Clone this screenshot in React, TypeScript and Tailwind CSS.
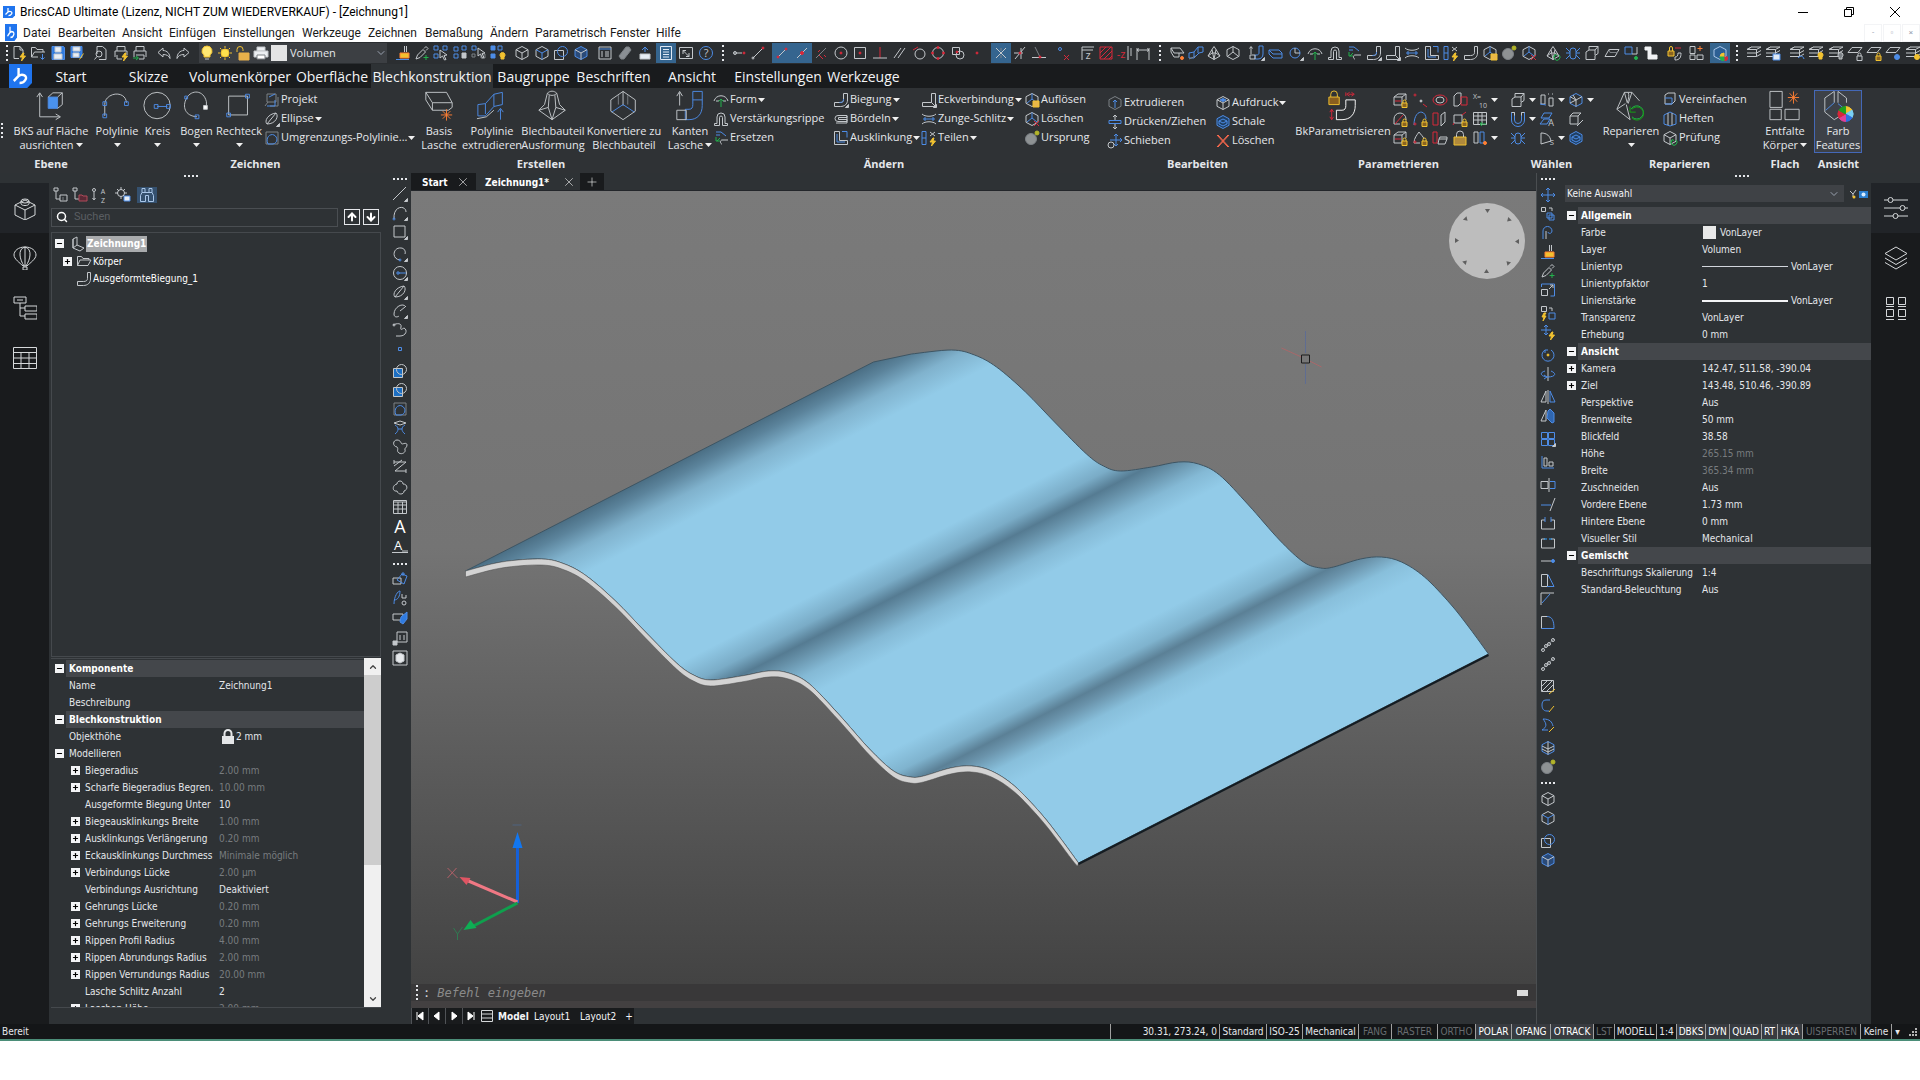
import type { ReactNode } from 'react'
import { ArrowDown, ArrowUp, ChevronDown, ChevronUp, Minus, Plus, Search, X } from 'lucide-react'

const W = '#c3c7cb'
const B = '#4d8ce6'
const R = '#d8283a'
const Y = '#f2c230'
const G = '#22b14c'
const O = '#ff7f33'
const D = '#7c8186'

type Label = { t: string; x: number; y: number; c: string; size?: number }
type Part = [string, string, string?] | Label

const circle = (x: number, y: number, r: number) =>
    `M${x - r} ${y}a${r} ${r} 0 1 0 ${2 * r} 0a${r} ${r} 0 1 0 ${-2 * r} 0z`

const box = (x: number, y: number, w: number, h = w) => `M${x} ${y}h${w}v${h}h${-w}z`

const CUBE = 'M8 1.5l6 3.2v6.6l-6 3.2-6-3.2V4.7z'
const CUBE_IN = 'M2 4.7L8 8l6-3.3M8 8v6.5'
const BOLT = 'M12 8l-3 4h2.500l-1 4 4-5h-2.500l1-3z'
const SHEET = 'M1 4.500h9.500L15 2H5.500zM1 8h9.500L15 5.500M1 11.500h9.500L15 9M5.500 2L1 4.500M10.500 4.500v7'
const BEND = 'M10.500 1.500h4V8c0 4-3 6.500-7 6.500h-6v-4h6c2 0 3-1 3-3z'
const WIRE = 'M8 1.500l2 3 4 6.500-6 3.500L2 11l4-6.500zM6 4.500L8 14.500l2-10M2 11l4-3h4l4 3'
const LOCK = 'M10 11h5v4.500h-5z'
const SHACKLE = 'M11 11V9.500a1.500 1.500 0 0 1 3 0V11'
const TAIL = 'M15.500 12.500v3h-3z'
const BULB = 'M12.500 7.500a2.500 2.500 0 0 1 1.500 4.500v2h-3v-2a2.500 2.500 0 0 1 1.500-4.500z'

const glyphs: Record<string, Part[]> = {
    newDoc: [['M3 1.500h6l3 3.500v5M9 1.500V5h3M3 1.500v12h5', W], [BOLT, Y, Y]],
    open: [['M1.500 12V2.500h4l1.500 2h6V7M1.500 12l3-5H15M1.500 12H8', W], ['M12.500 9v5M10.500 12.500l2 2 2-2', B]],
    save: [['M2 1.500h11.500l1 1v12H2z', B, '#2f7be0'], [box(5, 2, 6, 5), W, '#e8eef5'], [box(4, 9, 8, 5), W, '#e8eef5']],
    saveAs: [['M2 1.500h11v11H2z', B, '#2f7be0'], [box(4, 2, 7, 4), W, '#e8eef5'], [box(4, 8, 6, 4), W, '#e8eef5'], ['M14.500 8.500l-4 6', Y]],
    preview: [['M4 9V1.500h5.500l3.500 3v10H6', W], [circle(6, 9, 3), W], ['M4 11.500L1.500 14.500', W]],
    print: [['M4 6V1.500h8V6M2 12V6h12v4M4 10v4h5', W], [BOLT, Y, Y]],
    printOut: [['M4 6V1.500h8V6M2 12V6h12v6M4 10h8v4H7', W], ['M1 13h5M4 11l2.500 2L4 15', G]],
    undo: [['M7 3L2 7.500 7 12V9.500c4 0 6 1.500 7 4 0-5-3-8-7-8z', W]],
    redo: [['M9 3l5 4.500L9 12V9.500c-4 0-6 1.500-7 4 0-5 3-8 7-8z', W]],
    bulb: [['M8 1a5 5 0 0 1 3 9v2H5v-2a5 5 0 0 1 3-9z', Y, '#ffe873'], ['M6 14h4', W]],
    sun: [[circle(8, 8, 4), Y, '#ffe14d'], ['M8 1v2M8 13v2M1 8h2M13 8h2M3 3l1.500 1.500M11.500 11.500L13 13M13 3l-1.500 1.500M4.500 11.500L3 13', Y]],
    unlock: [['M2 7V4.500a3 3 0 0 1 6 0V6', Y], [box(4, 8, 10, 7), '#e8b04a', '#e8b04a']],
    printer: [[box(4, 2, 8, 4), W, '#eceff2'], [box(1, 6, 14, 6), W, '#eceff2'], [box(4, 10, 8, 4), D, '#fff']],
    brush: [['M9.500 1v6M11.500 1v6', W], ['M5 8h9v5H5z', O, Y], ['M1 14.500h13', B]],
    dropper: [['M2 14l1.500-4L9 4.500l2.500 2.500L6 12.500zM10 3.500l2-2 2 2-2 2', W], ['M12 10v5M9.500 12.500h5', G]],
    pick: [[box(1, 1, 4), B], [box(10, 1, 4), B], [box(1, 9, 4), B], ['M7 5l7 5-3 .5 2 4-1.500.5-2-4L7 13z', W, '#2f3234']],
    filterA: [[box(2, 2, 4), B], [box(2, 9, 4), B], [box(10, 1, 4), B], ['M10 8h4v5h-4z', W, W]],
    filterB: [[box(1, 1, 4), B], [box(10, 9, 4), D], ['M7 3l7 5-3 .5 2 4-1.500.5-2-4L7 11z', W, '#2f3234'], [box(1, 9, 3), D]],
    filterC: [[box(1, 1, 4), B, B], [box(1, 9, 4), B, B], [box(8, 1, 4), B], [BULB, Y, Y]],
    cube: [[CUBE, W], [CUBE_IN, W]],
    cubeBlue: [[CUBE, W], [CUBE_IN, B]],
    cubeDark: [[CUBE, B, '#2a4a78'], [CUBE_IN, W]],
    blueBox: [[box(1.5, 5.5, 9), W], [circle(9.5, 6.5, 5), B]],
    blueFill: [[box(1.5, 5.5, 9), W, '#1c6fc4'], [circle(9.5, 6.5, 5), W]],
    panel: [[box(2, 2, 12, 12), W], ['M2 4h12', B], ['M4 7h2M4 9h2M4 11h2M8 7h4M8 9h4M8 11h4', W]],
    eraser: [['M4 14l-2-3 7-9h3l2 3-7 9z', D, '#8a8f94']],
    device: [['M8 2v5M5 5l3-3 3 3', B], [box(3, 9, 10, 5), W, '#e8eef5']],
    list: [[box(2.5, 1.5, 11, 13), '#dfe9f5', '#35658f'], ['M5 4.500h6M5 7h6M5 9.500h6M5 12h6', '#dfe9f5']],
    expand: [[box(1.5, 2.5, 13, 11), W], ['M5 9V5.500h3M5 5.500l3 3M11 8v3.500H8M11 11.500l-3-3', W]],
    help: [[circle(8, 8, 6.5), B], { t: '?', x: 8, y: 12, c: W, size: 11 }],
    snapA: [['M2 8h8', W], [circle(12, 8, 1), R, R], [circle(3, 8, 1.5), W]],
    snapB: [['M3 13L13 3', W], [circle(13, 3, 1), R, R], [circle(3, 13, 1), W]],
    snapEnd: [['M3 13L12 4', W], [circle(12, 4, 1), R, R], [circle(4, 12, 1), R, R]],
    snapMid: [['M3 13L13 3', W], [circle(8, 8, 1.5), R, R]],
    snapNear: [['M3 13L13 3', D], ['M5 7l2-2M11 10l2 2M6 10l4 4', R]],
    snapCen: [[circle(8, 8, 6), W], [circle(8, 8, 1), R, R]],
    snapGeo: [[box(2.5, 2.5, 11), W], [circle(8, 8, 1), R, R]],
    snapPerp: [['M8 2v11', R], ['M1 13h14', W]],
    snapPar: [['M3 13L10 3M7 13l7-10', W]],
    snapTan: [[circle(9, 9, 5), W], ['M2 5l5-3', R]],
    snapQuad: [[circle(8, 8, 5.5), W], [circle(8, 2.5, 1), R, R], [circle(8, 13.5, 1), R, R], [circle(2.5, 8, 1), R, R], [circle(13.5, 8, 1), R, R]],
    snapIns: [[box(2.5, 2.5, 7), W], [circle(10, 10, 4), W], [circle(7, 7, 1), R, R]],
    snapNode: [[circle(8, 8, 1), R, R]],
    snapX: [['M3 3l10 10M13 3L3 13', W], ['M8 3v3M8 10v3', D]],
    snapApp: [['M2 8h9M3 14L13 2M9 3v11', W], [circle(8, 8, 1), R, R]],
    snapExt: [['M4 2l5 10', D], ['M1 12.500h14', W], [circle(9, 12, 1), R, R]],
    snapOff: [[circle(5, 4, 1.5), B], ['M9 10l5 5M14 10l-5 5', R]],
    zAxis: [['M3 15V2h12M3 5h11', W], { t: 'z', x: 9, y: 14, c: W, size: 11 }],
    hatchRed: [[box(2, 2, 12), R], ['M2 8l6-6M2 13L13 2M6 14l8-8M11 14l3-3', R]],
    zPlane: [['M12 1v14M15 3v8', W], { t: '-z', x: 5, y: 13, c: R, size: 11 }],
    dimension: [['M2 15V3M14 15V3M2 5h12M4 3.500L2 5l2 1.500M12 3.500L14 5l-2 1.500', W]],
    baseFlange: [['M2 3h9l4 5H5zM2 3v4l3 5h5V8', W], [circle(13, 13, 1.5), O, O]],
    polyExtrude: [['M1 8l5-1 4-5h5v5l-4 1-5 5H1z', B], ['M1 14l7-3', D], ['M6 7v5M10 2v6', B]],
    wire: [[WIRE, W]],
    convert: [[CUBE, W], ['M8 1.500V7L3 11M8 7l5 4', W]],
    edgeFlange: [['M2 9V2M.5 3.500L2 1.500l1.500 2', W], ['M10 1h4v8c0 3-2 5-5 5H6v-4h2c1 0 2-1 2-2z', B], [box(1, 10, 5, 4), W], [TAIL, W, W]],
    flange: [['M1 5h10l3 3v5H5L1 9z', B], ['M1 5l4 4h9', B]],
    round: [[circle(7, 8, 5), B], ['M7 3v5h5', W], [TAIL, W, W]],
    form: [['M1 9c2-7 12-7 14 0M3 9h3M10 9h3', W], ['M8 15V7M5.500 9.500L8 7l2.500 2.500', G]],
    rib: [['M1.500 14.500v-2H4V6a4 4 0 0 1 8 0v6.500h2.500v2H9.500V6.500a1.500 1.500 0 0 0-3 0v8z', W]],
    replace: [['M3 2h5l5 4M3 5h4', B], ['M3 7v4h4M4 11l3-3', G], ['M9 14c-2 0-2-4 0-4h6', W]],
    bend: [[BEND, W], ['M10.500 7c0 4-2 3-4 3.500', B], [TAIL, W, W]],
    junction: [['M10.500 1.500h4v13H1.500v-4h9zM10.500 10.500l4 4', W], [TAIL, W, W]],
    hem: [['M14 10.500H5a3 3 0 0 1 0-6h9v2H5.500v2H14zM14 5v7H3', W]],
    tongue: [['M1 3c3 3 11 3 14 0M1 13c3-3 11-3 14 0', W], ['M2 8h12M4 6v4M12 6v4', B]],
    relief: [['M1.500 1.500h5v9h8v4h-13z', W], ['M4 4v8h8M9 1.500h5v6', B]],
    split: [['M1 1.500h4v13H1zM1 8h4', B], ['M9 2l5 4M14 2L9 6', W], [BOLT, Y, Y]],
    explode: [[CUBE, W], ['M8 1.500V7L3 11M8 7l5 4', B], ['M9 9h6v6H9z', Y, '#e9b84a']],
    erase: [[CUBE, W], ['M8 1.500V7L3 11M8 7l5 4', B], ['M10 10l5 5M15 10l-5 5', R]],
    origin: [[circle(7, 9, 5.5), D, '#8e9294'], [circle(13, 3, 2), '#b3b52a', '#b3b52a']],
    repairS: [[WIRE, W], ['M14 10a3 3 0 1 1-4 0M9 12l1-2.500 2 1', G]],
    spider: [['M5 6a3 3 0 0 1 6 0v5a3 3 0 0 1-6 0zM1 3l4 4M15 3l-4 4M1 8h4M11 8h4M1 14l4-4M15 14l-4-4', B]],
    solid: [['M5 1.500h9v7l-3 2v4H2V7l3-2zM5 5h6v5M11 5l3-3.500', W]],
    plate: [['M5 4.500h10l-4 7H1z', W], ['M5 4.500l1 3h8', D]],
    link: [[box(2, 2, 7), B], ['M9 9h5V2', W], [circle(13, 13, 1.5), G, G]],
    pipe: [['M2 2h6v8h6v4H5V5H2z', '#f1f3f5', '#f1f3f5']],
    param: [['M8 15c5 0 6-3 6-7h-3c0 3-1 4-3 4z', W], [box(1, 6, 6, 5), Y, '#8a6420'], ['M2.500 6V3a1.500 1.500 0 0 1 3 0v3', Y], ['M8 3h6', R]],
    unfold: [[box(2, 1.5, 5, 7), W], [box(2, 10, 5, 4.5), W], [box(9, 10, 6, 4.5), W], ['M12 1v5M9.500 3.500h5', O]],
    colour: [[CUBE, '#a9c6e8', '#2c5f94'], ['M12 8a4 4 0 0 0-4 4h4z', Y, Y], ['M12 12v4a4 4 0 0 0 4-4z', R, R], ['M12 12h-4a4 4 0 0 0 4 4z', G, G]],
    layers: [[SHEET, W]],
    layersSave: [[SHEET, W], [box(8, 9, 7, 6), B, '#dfe9f5']],
    layersBack: [[SHEET, W], ['M9 13c3-3 5-2 6 1', B]],
    layersBulb: [[SHEET, W], [BULB, Y, Y]],
    layersOff: [[SHEET, W], [BULB, W, D]],
    planeLock: [['M5 2.500h10l-4 5H1z', W], [LOCK, W], [SHACKLE, W]],
    planeUnlock: [['M5 2.500h10l-4 5H1z', W], [LOCK, Y, '#8a6420'], [SHACKLE, Y]],
    planeFreeze: [['M5 2.500h10l-4 5H1z', W], [circle(12, 12, 2.5), B, B]],
    layersSun: [[SHEET, W], [circle(12, 12, 2.5), Y, Y]],
    layersBlue: [[SHEET, B], ['M8 14h7', W]],
    project: [['M3 2h9v8H3zM1 14l3-4M14 5v9H6', D], ['M5 5l6-3M3 14h8V8', B]],
    ellipse: [['M3 13c-3-3 1-10 9-11 3 3 0 11-9 11zM3 13l9-11', W], [TAIL, W, W]],
    boundary: [[box(2, 2, 12), D], ['M4 14c-3-6 2-11 6-9s4 8-1 9z', B]],
    extrude: [[CUBE, D], ['M8 13V5M6 7l2-2 2 2', B]],
    push: [['M8 1v5M6 3l2-2 2 2M8 10v5M6 13l2 2 2-2', W], ['M2 6.500h12v3H2z', B]],
    move: [['M9 1v12M3 7h12M7 3l2-2 2 2M7 11l2 2 2-2M13 5l2 2-2 2', B], [circle(4, 12, 3), W]],
    imprint: [[CUBE, W], [CUBE_IN, W], ['M5 5l3-1.500L11 5 8 6.500z', B, B]],
    shell: [[CUBE, B, '#1f3f63'], ['M4 7l4-2 4 2-4 2zM4 7v3l4 2 4-2V7', B]],
    del: [['M2 2l11 12M3 2l11 12M13 2L2 14M14 2L3 14', '#ff6a4d']],
    lockBox: [['M2 5h8v8H2zM2 5l4-3h8l-4 3M14 2v6', W], ['M3 9h6', R], [LOCK, Y, '#8a6420'], [SHACKLE, Y]],
    points: [[circle(3, 3, 1), R], [circle(9, 9, 1), W, W], ['M11 12l4 3', R]],
    rings: [['M1 8a7 5 0 1 0 14 0a7 5 0 1 0-14 0z', R], ['M4 8a4 3 0 1 0 8 0a4 3 0 1 0-8 0z', W]],
    pair: [['M2 14V4l3-3h4v10l-3 3z', W], ['M9 5h6v8H9z', R]],
    xEquals: [{ t: 'X=', x: 5, y: 7, c: W, size: 7 }, { t: '10', x: 11, y: 16, c: W, size: 7 }],
    lockRound: [['M2 8a6 6 0 0 1 12 0v1M2 8v5h6', W], ['M3 13l8-9', R], [LOCK, Y, '#8a6420'], [SHACKLE, Y]],
    lockArc: [['M2 14c0-16 12-16 12-6', B], [circle(3, 13, 1), R], [LOCK, Y, '#8a6420'], [SHACKLE, Y]],
    redPair: [[box(1, 2, 5, 12), R], ['M9 4l4-3v10l-4 4z', W]],
    redBox: [[box(2, 4, 8), W], ['M10 4l4-3M2 12l-1 2', R], [LOCK, Y, '#8a6420'], [SHACKLE, Y]],
    redPlate: [['M1 2h4v11H1z', R], ['M7 9h8l-2 5H6zM7 9l1-2h7v2', W]],
    table: [[box(1.5, 1.5, 13, 12), W], ['M1.500 5h13M1.500 9h13M6 1.500v12M10 1.500v12', W], ['M8 13h6M10 11l-2 2 2 2', G]],
    lockTri: [['M2 13c0-5 3-8 5-11 2 3 4 4 5 7M2 13h6', W], [circle(3, 12, 1), R], [LOCK, Y, '#8a6420'], [SHACKLE, Y]],
    lock: [[box(2, 7, 12, 8), Y, '#b08a3c'], ['M4.500 7V4.500a3.500 3.500 0 0 1 7 0V7', W]],
    columns: [[box(2, 2, 4, 11), W], [box(8, 2, 4, 11), B], [circle(13, 13, 1.5), O, O]],
    tube: [['M1.500 1.500h3V9a3.500 3.500 0 0 0 7 0V1.500h3V9a6.500 6.500 0 0 1-13 0z', B], ['M1.500 1.500h3v3M11.500 4.500v-3h3', W]],
    capsules: [['M2 3h4v9H2zM10 6h4v8h-4z', W], ['M1 12l6 1', B], ['M9 2h1M13 2h1', W]],
    hexBlue: [[CUBE, B], ['M2 4.700L8 8l6-3.300M5 3l3 5v6.500M8 8L2 11', W]],
    planes: [['M5 2h8l-3 5H2zM5 8h6l-3 5H1z', B], { t: 'A', x: 12, y: 15, c: W, size: 9 }],
    boxArrow: [['M2 5h8v8H2zM2 5l3-3h8l-3 3', W], ['M9 15l6-6', W]],
    arcS: [['M2 14V3c6 0 9 3 10 8z', W], { t: 's', x: 13, y: 15, c: W, size: 9 }],
    simplify: [['M3 12V3l3-2h7v8l-3 3z', W], ['M3 12h7V6H3', B]],
    stitch: [['M2 4l6-3 6 3v9l-6 2-6-2z', B], ['M6 2v12M10 2v12', W]],
    check: [[CUBE, W], [CUBE_IN, W], ['M14 10a3 3 0 1 1-4 0M9 12l1-2.500 2 1', G]],
    line: [['M1 14L14 1', W], [TAIL, W, W]],
    polyline: [['M2 14C1 0 14 0 14 7', W], [circle(2, 14, 1), B], [TAIL, W, W]],
    rect: [[box(2, 2, 11), W], [TAIL, W, W]],
    arc: [['M8 14c-9-1-7-13 1-12 3 0 5 3 4 6', W], [circle(8, 14, 1), B], [TAIL, W, W]],
    circleTool: [[circle(8, 8, 6.5), W], ['M7 8h7', B], [box(5, 7, 2), B], [TAIL, W, W]],
    arcEll: [['M14 4c-3-5-12 0-12 7 0 4 4 3 5 2M8 8l5-4', W], [TAIL, W, W]],
    spline: [['M1 3c4-2 9-2 8 2s1 2 3 1c4 2 2 8-4 8H4', W], [circle(2, 3, 1), W]],
    pointTool: [[box(6.5, 6.5, 3), B]],
    lens: [['M2 3l6-2 6 2-6 2z', W], ['M3 5c4 2 4 6 0 9M13 5c-4 2-4 6 0 9M6 9h4', B]],
    blob: [['M5 8C0 7 1 1 5 1s4 4 5 4 5-2 5 1-3 3-2 5-3 5-6 3 0-4-2-6z', W]],
    zTool: [['M2 4h12L3 13h11M2 2v4M14 11v4M2 8l8-6', W]],
    cloud: [['M5 4c0-4 6-4 6 0 5 0 5 6 1 7 0 4-6 4-7 0-5 1-5-6 0-7z', W]],
    grid: [[box(1.5, 1.5, 13), W], ['M1.500 3h13', W], ['M1.500 6h13M1.500 10h13M6 3v11M10.500 3v11', W]],
    bigA: [{ t: 'A', x: 8, y: 15, c: '#fff', size: 18 }],
    smallA: [{ t: 'A', x: 6, y: 13, c: '#fff', size: 13 }, ['M10 14h6M0 15.500h16', W]],
    press: [[box(1, 7, 8, 6), W], ['M5 9l5-6 5 2-3 8z', B], ['M11 1v4M9 3h4', B]],
    feather: [['M2 14C2 6 6 1 8 1c0 5-2 9-6 9', B], [circle(12, 13, 2), W], ['M10 4v4h4V5', W]],
    slab: [[box(1, 5, 10, 6), W], ['M8 13l1-5 6-5v7l-4 5z', B, '#2f7be0']],
    win: [[box(5, 1, 10), W], ['M8 4v5M12 4v5', W], [box(1, 10, 4, 4), W, W]],
    winCube: [[box(1, 1, 14), W], ['M4 5l4-2 4 2v6l-4 2-4-2z', W, '#e6e9ec']],
    copy: [[box(1.5, 1.5, 4), W], [box(9, 9, 5), B], ['M9 2h3v3', W], [box(7, 7, 5), B]],
    offset: [['M3 14V6a4 4 0 0 1 9 0c0 3-4 3-4 1', B], ['M6 14V6', W]],
    scale: [[box(1.5, 7.5, 6), W], ['M1.500 5V2h13v12h-4', B], ['M9 7l4-4M10 3h3v3', W]],
    copyFast: [[box(1.5, 1.5, 5), W], ['M9 3h3v3', W], [box(9, 8, 6), B], ['M4 8l-2 4h2l-1 4 3-5H4l2-3z', Y, Y]],
    moveFast: [['M6 1v10M1 6h10M4 3l2-2 2 2M4 9l2 2 2-2', B], [BOLT, Y, Y]],
    moveAll: [['M8 1v14M1 8h14M6 3l2-2 2 2M6 13l2 2 2-2M3 6L1 8l2 2M13 6l2 2-2 2', B]],
    rotate: [['M5 3a6 6 0 1 0 6 0M5 3h3M5 3v3', B], [circle(8, 8, 1), Y, Y]],
    rotate3d: [['M8 1v14', W], ['M5 5c-7 2-3 6 3 6s10-3 3-6M4 9l3 2-3 2', B]],
    mirror: [['M6 2v11H1zM8 1v14', W], ['M10 2v11h5z', B]],
    mirror3d: [['M6 2v11H1z', W], ['M8 3l2-2 4 4v9l-2 1-5-5z', B, '#2f66b0']],
    array: [[box(1.5, 1.5, 6), B], [box(8.5, 1.5, 6), B], [box(1.5, 8.5, 6), B], [box(8.5, 8.5, 6), B], [TAIL, W, W]],
    align: [['M2 2v12h12', B], [box(4, 4, 3, 8), W], [box(9, 8, 4), W]],
    stretch: [['M1 4.500h7v7H1zM9 1v14', W], ['M10 4.500h5v7h-5', B]],
    trim: [['M1 9h10', B], ['M10 15l5-13', W]],
    breakA: [['M5 5H1.500v9h13V5H11', W], ['M5 2v5M11 2v5', B]],
    breakB: [['M5 5H1.500v9h13V5H11', W], ['M4 5h3M12 5H9', '#2fa0ff']],
    extend: [['M1 8h10', W], [circle(13, 8, 1.5), B, B]],
    chamfer: [[box(1.5, 2.5, 6, 12), W], ['M8 2.500l6 12H7', B]],
    chamferB: [['M1 14V2h13', W], ['M2 12l8-9', B]],
    fillet: [['M1.500 14.500v-12h6', W], ['M7 2.500c5 0 7 4 7 12H1.500', B]],
    chain: [['M2 13L14 2', D], [circle(3, 13, 1.5), W], [circle(6, 9, 1.5), W], [circle(9, 7, 1.5), W], [circle(13, 3, 1.5), W]],
    hatchEdit: [[box(1.5, 1.5, 12, 11), W], ['M2 7l5-5M2 12L12 2M7 12l6-6', W], ['M9 15l6-5', Y]],
    curveEdit: [['M10 2H6C3 2 2 4 2 7s1 6 5 6h2', B], ['M9 14l5-6', Y]],
    splineEdit: [['M3 2c7 0 9 3 10 7M3 2c4 5 4 8-1 11h6', B], ['M9 15l5-5', Y]],
    cubeSplit: [[CUBE, B], ['M2 6l6 3 6-3M2 9l6 3 6-3M8 1.500v13', W]],
    treeOpen: [[box(1, 1, 4, 3), W], ['M3 4v8h4M7 8h7v6H7z', W], ['M10 10v3', D]],
    treeRed: [[box(1, 1, 4, 3), W], ['M3 4v8h4', W], ['M7 8h3l1 1h4v5H7z', '#b04a5a', '#5a2a36']],
    sortAz: [[circle(3, 3, 1.5), W], ['M3 5v7M1.500 11L3 13l1.500-2', W], { t: 'A', x: 12, y: 7, c: W, size: 7 }, { t: 'Z', x: 12, y: 16, c: W, size: 7 }],
    gearSave: [[circle(6, 6, 3.5), W], ['M6 0v3M6 9v3M0 6h3M9 6h3M2 2l2 2M8 8l2 2M10 2L8 4', W], [box(9, 9, 6, 5), B, '#e8eef5']],
    binoculars: [['M3 1.500h3v4h4v-4h3v4l1.500 3v6h-5v-6h-3v6h-5v-6L3 5.500zM3 5.500h3M10 5.500h3', '#a9c6e8']],
    part: [['M3 3l4-2v8l7 3-4 3-7-3zM3 3v9M7 9l-4 3', W]],
    folder: [['M1.500 12.500v-9h4l1.500 2h6V7M1.500 12.500L4 7h11l-3 5.500z', W]],
    bendPlain: [['M11.500 1.500h3V8c0 4-3 6.500-7 6.500h-6v-4h6c2.500 0 4-1 4-3z', W]],
}

const bigGlyphs: Record<string, Part[]> = {
    ucs: [['M5 28V3M2 7l3-4.500L8 7M5 28h21M22 25l5 3-5 3', W], [box(14, 7, 10, 12), B, '#4a92ee'], ['M14 7l5-4.500h10V15l-5 4M24 7l5-4.500', W]],
    poly: [['M4 27V15C4 2 26-1 27 13', W], [box(2, 25, 4), B], [box(2, 12, 4), B], [box(25, 12, 4), B]],
    circle: [[circle(16, 16, 14), W], ['M16 17h11', B], [box(13, 15, 4), B], [box(26, 15, 4), B]],
    arc: [['M17 28C4 27 1 17 6 8S24-1 27 12v5', W], [box(15, 26, 4), B], [box(4, 6, 3), B], [box(24, 16, 4), W, '#fff']],
    rect: [[box(6, 6, 20), W], [box(24, 4, 4), B], [box(4, 24, 4), B]],
    base: [['M3 2h22l6 11H10zM3 2v8l7 11h17l4-3v-5M10 13v8', W], ['M25 20v12M19 26h12M21 22l8 8M29 22l-8 8', O]],
    polyExt: [['M2 15l8-1 9-10 9-2v13l-9 2-9 10H2z', B], ['M10 14v11M19 4v13', B], ['M1 30l10-2 8-7', W], ['M26 31V20M23 23l3-4 3 4', B]],
    formed: [['M11 3c3-3 7-3 10 0l3 12 6 6-14 10L2 21l6-6zM11 3c3 3 7 3 10 0M13 5L12 18l4 13 4-13-1-13M2 21l10-3M30 21l-10-3', W]],
    convert: [['M16 1L3 10v12l13 9 13-9V10zM16 1v15', W], ['M16 15L4 23M16 15l12 8', B], ['M11 5v10M21 5v10', D]],
    edge: [['M6 16V2M3 6l3-5 3 5', W], ['M20 1h10v15c0 9-5 15-14 15h-4V20h4c3 0 4-2 4-5zM20 10h10', B], [box(3, 21, 10, 10), W]],
    bkParam: [['M20 10h10v6c0 9-5 15-14 15h-6V21h6c3 0 4-2 4-5z', '#fff'], [box(2, 7, 11, 8), Y, '#8a5f1e'], ['M4 7V4a3.500 3.500 0 0 1 7 0v3', Y], ['M20 2v4M23 4h5M26 2l3 2-3 2M24 2l-3 2 3 2', R], ['M5 20v11M3 23l2-3 2 3M3 28l2 3 2-3', R]],
    repair: [['M10 2h8l8 9M10 2L2 20l14 11-4-16M10 2l3 11c2-5 2-8 1-11M18 2l-4 12M2 20l9-6', W], ['M17 20a7 7 0 1 1 1 8', G], ['M18 20a7 7 0 1 1 0 9M16 17v6h6', '#14a514']],
    unfold: [[box(1, 1, 13, 17), W], [box(1, 20, 12, 11), W], [box(17, 20, 15, 11), W], ['M26 1v13M20 7.500h12M22 3l8 9M30 3l-8 9', O]],
    colour: [
        ['M13 1L3 8v15l10 8 8-5M13 1v12M17 1v12M17 1l9 7v5', W],
        ['M13 13L4 21M17 14l5 4', B],
        ['M25 25V17a8 8 0 0 1 7 4z', Y, Y], ['M25 25l7-4a8 8 0 0 1 0 8z', '#7ad0f5', '#7ad0f5'], ['M25 25l7 4a8 8 0 0 1-7 4z', '#2f6fe0', '#2f6fe0'],
        ['M25 25v8a8 8 0 0 1-7-4z', '#e0409a', '#e0409a'], ['M25 25l-7 4a8 8 0 0 1 0-8z', R, R], ['M25 25l-7-4a8 8 0 0 1 7-4z', '#1ea01e', '#1ea01e'],
    ],
}

function Parts({ parts }: { parts: Part[] }) {
    return (
        <>
            {parts.map((part, i) =>
                Array.isArray(part) ? (
                    <path key={i} d={part[0]} stroke={part[1]} fill={part[2] || 'none'} />
                ) : (
                    <text key={i} x={part.x} y={part.y} fill={part.c} fontSize={part.size} textAnchor="middle" fontFamily="Open Sans, sans-serif">
                        {part.t}
                    </text>
                ),
            )}
        </>
    )
}

function Glyph({ name, className = 'size-4' }: { name: string; className?: string }) {
    return (
        <svg viewBox="0 0 16 16" className={`${className} shrink-0 overflow-visible`} aria-hidden="true">
            <Parts parts={glyphs[name]} />
        </svg>
    )
}

function BigGlyph({ name }: { name: string }) {
    return (
        <svg viewBox="0 0 34 33" className="h-8 w-8 shrink-0" aria-hidden="true">
            <Parts parts={bigGlyphs[name]} />
        </svg>
    )
}

function Caret() {
    return (
        <svg viewBox="0 0 7 4" className="h-1 w-[7px] shrink-0" aria-hidden="true">
            <path d="M0 0h7L3.500 4z" fill="#f0f0f0" />
        </svg>
    )
}

function Logo({ className }: { className: string }) {
    return (
        <svg viewBox="0 0 24 24" preserveAspectRatio="none" className={className} aria-hidden="true">
            <path d="M0 0h24v19l-5 5H0z" fill="#1f74ee" />
            <path d="M10 4v8l-5 5M10 12c4-3 10 0 7 4-1 2-3 3-6 3" stroke="#fff" strokeWidth="2.500" fill="none" />
        </svg>
    )
}

function TitleBar() {
    return (
        <header className="h-[23px] shrink-0 flex items-center bg-white text-black">
            <Logo className="ml-[3px] size-3" />
            <h1 className="ml-[5px] text-xs">BricsCAD Ultimate (Lizenz, NICHT ZUM WIEDERVERKAUF) - [Zeichnung1]</h1>
            <div className="ml-auto flex h-full items-center pr-[2px]">
                <button aria-label="Minimieren" className="w-[46px] flex justify-center">
                    <svg viewBox="0 0 12 12" className="size-3" stroke="#000" fill="none"><path d="M1 6.500h10" /></svg>
                </button>
                <button aria-label="Wiederherstellen" className="w-[46px] flex justify-center">
                    <svg viewBox="0 0 12 12" className="size-3" stroke="#000" fill="none"><path d="M1.500 3.500h7v7h-7zM3.500 3.500v-2h7v7h-2" /></svg>
                </button>
                <button aria-label="Schließen" className="w-[46px] flex justify-center">
                    <svg viewBox="0 0 12 12" className="size-3" stroke="#000" fill="none"><path d="M1 1l10 10M11 1L1 11" /></svg>
                </button>
            </div>
        </header>
    )
}

const menus = [
    ['Datei', 'w-[35px]'],
    ['Bearbeiten', 'w-[64px]'],
    ['Ansicht', 'w-[47px]'],
    ['Einfügen', 'w-[54px]'],
    ['Einstellungen', 'w-[79px]'],
    ['Werkzeuge', 'w-[66px]'],
    ['Zeichnen', 'w-[57px]'],
    ['Bemaßung', 'w-[65px]'],
    ['Ändern', 'w-[45px]'],
    ['Parametrisch', 'w-[75px]'],
    ['Fenster', 'w-[46px]'],
    ['Hilfe', 'w-[30px]'],
]

function MenuBar() {
    return (
        <nav className="h-[19px] shrink-0 flex items-center bg-white text-xs text-[#1a1a1a]">
            <Logo className="ml-[5px] mr-[6px] h-[17px] w-3" />
            {menus.map(([label, width]) => (
                <button key={label} className={`${width} text-left whitespace-nowrap`}>{label}</button>
            ))}
            <div className="ml-auto flex gap-px">
                {['-', '▫', '×'].map((mark) => (
                    <button key={mark} aria-label={mark} className="h-[18px] w-[18px] border border-gray-100 text-[8px] leading-4 text-gray-400">{mark}</button>
                ))}
            </div>
        </nav>
    )
}

function Grip() {
    return (
        <div className="flex flex-col justify-between h-4 w-[2px] shrink-0">
            {[0, 1, 2, 3].map((i) => <span key={i} className="size-[2px] bg-gray-200" />)}
        </div>
    )
}

function GripRow({ className = '' }: { className?: string }) {
    return (
        <div className={`flex gap-[2px] h-[2px] shrink-0 ${className}`}>
            {[0, 1, 2, 3].map((i) => <span key={i} className="w-[2px] h-[2px] bg-gray-200" />)}
        </div>
    )
}

function IconGroup({ width, icons, active = [] }: { width: string; icons: string; active?: number[] }) {
    return (
        <div className={`${width} flex items-center justify-between shrink-0`}>
            {icons.split(' ').map((name, i) => (
                <button key={i} aria-label={name} className={`size-4 ${active.includes(i) ? 'bg-[#35658f] outline-2 outline-[#35658f]' : ''}`}>
                    <Glyph name={name} />
                </button>
            ))}
        </div>
    )
}

function Toolbar() {
    return (
        <div className="h-[22px] shrink-0 flex items-center gap-2 overflow-hidden bg-[#2b2e31] pl-[6px]">
            <div className="flex items-center gap-[3px]">
                <Grip />
                <IconGroup width="w-[74px]" icons="newDoc open save saveAs" />
            </div>
            <IconGroup width="w-[55px]" icons="preview print printOut" />
            <IconGroup width="w-[35px]" icons="undo redo" />
            <div className="flex items-center w-[188px] h-5 shrink-0 bg-[#3c3f43]">
                <div className="flex gap-[2px]">
                    <Glyph name="bulb" />
                    <Glyph name="sun" />
                    <Glyph name="unlock" />
                    <Glyph name="printer" />
                    <span className="size-4 bg-[#e4e4e4]" />
                </div>
                <select aria-label="Layer" className="ml-[3px] flex-1 min-w-0 appearance-none bg-transparent font-['Open_Sans',sans-serif] text-[11px] text-gray-200 outline-none">
                    <option>Volumen</option>
                </select>
                <ChevronDown className="size-3 text-gray-400" />
            </div>
            <IconGroup width="w-[111px]" icons="brush dropper pick filterA filterB filterC" />
            <IconGroup width="w-[75px]" icons="cube cubeBlue blueBox cubeDark" />
            <IconGroup width="w-[117px]" icons="panel eraser device list expand help" active={[3]} />
            <Grip />
            <IconGroup width="w-[34px]" icons="snapA snapB" />
            <IconGroup width="w-[211px]" icons="snapEnd snapMid snapNear snapCen snapGeo snapPerp snapPar snapTan snapQuad snapIns snapNode" active={[0, 1]} />
            <IconGroup width="w-[54px]" icons="snapX snapApp snapExt" active={[0]} />
            <IconGroup width="w-4" icons="snapOff" />
            <IconGroup width="w-[72px]" icons="zAxis hatchRed zPlane dimension" />
            <Grip />
            <IconGroup width="w-[72px]" icons="baseFlange polyExtrude wire convert" />
            <IconGroup width="w-[288px]" icons="edgeFlange flange round form rib replace bend junction tongue relief split bendPlain explode origin erase" />
            <IconGroup width="w-[114px]" icons="repairS spider solid plate link pipe" />
            <IconGroup width="w-[37px]" icons="param unfold" />
            <IconGroup width="w-4" icons="colour" active={[0]} />
            <Grip />
            <IconGroup width="w-[35px]" icons="layers layersSave" />
            <IconGroup width="w-[151px]" icons="layersBack layersBulb layersOff planeLock planeUnlock planeFreeze layersSun layersBlue" />
        </div>
    )
}

const ribbonTabs = [
    ['Start', 'w-[78px]'],
    ['Skizze', 'w-[77px]'],
    ['Volumenkörper', 'w-[106px]'],
    ['Oberfläche', 'w-[78px]'],
    ['Blechkonstruktion', 'w-[122px]'],
    ['Baugruppe', 'w-[81px]'],
    ['Beschriften', 'w-[79px]'],
    ['Ansicht', 'w-[78px]'],
    ['Einstellungen', 'w-[94px]'],
    ['Werkzeuge', 'w-[77px]'],
]

function RibbonTabs() {
    return (
        <div role="tablist" className="h-6 shrink-0 flex items-stretch bg-[#191b1d] pl-[9px] font-['Open_Sans',sans-serif]">
            <Logo className="h-6 w-[23px]" />
            {ribbonTabs.map(([label, width]) => {
                const selected = label === 'Blechkonstruktion'
                return (
                    <button
                        key={label}
                        role="tab"
                        aria-selected={selected}
                        className={`${width} shrink-0 pt-px whitespace-nowrap text-sm leading-6 text-gray-100 ${selected ? 'bg-[#2e3235]' : ''}`}
                    >
                        {label}
                    </button>
                )
            })}
        </div>
    )
}

function Group({ title, width, children }: { title: string; width: string; children: ReactNode }) {
    return (
        <section className={`${width} shrink-0 flex flex-col`}>
            <div className="h-[68px] flex pt-[2px]">{children}</div>
            <h2 className="text-center text-[11px] leading-[15px] font-bold">{title}</h2>
        </section>
    )
}

interface BigProps {
    icon: string
    lines: string[]
    width: string
    menu?: boolean
    selected?: boolean
}

function Big({ icon, lines, width, menu, selected }: BigProps) {
    return (
        <button className={`${width} shrink-0 h-[63px] flex flex-col items-center text-[11px] leading-[14px] whitespace-nowrap ${selected ? 'bg-[#3d4148] outline -outline-offset-1 outline-[#4468b8]' : ''}`}>
            <BigGlyph name={icon} />
            <span className="mt-[2px]">{lines[0]}</span>
            <span className="h-[14px] flex items-center gap-[2px]">
                {lines[1]}
                {menu && <Caret />}
            </span>
        </button>
    )
}

function SmallColumn({ width, items }: { width: string; items: [string, string, boolean?][] }) {
    return (
        <div className={`${width} shrink-0 flex flex-col`}>
            {items.map(([icon, label, menu]) => (
                <button key={label} className="h-[19px] flex items-center gap-px text-[11px] whitespace-nowrap">
                    <Glyph name={icon} />
                    {label}
                    {menu && <Caret />}
                </button>
            ))}
        </div>
    )
}

function IconGrid({ columns, cell, icons }: { columns: string; cell: string; icons: [string, boolean?][] }) {
    return (
        <div className={`grid ${columns} auto-rows-[19px] content-start`}>
            {icons.map(([name, menu], i) => (
                <button key={i} aria-label={name} className={`${cell} flex items-center gap-[3px]`}>
                    <Glyph name={name} />
                    {menu && <Caret />}
                </button>
            ))}
        </div>
    )
}

function Ribbon() {
    return (
        <div className="h-[85px] shrink-0 flex items-start overflow-hidden bg-[#2f3235] font-['Open_Sans',sans-serif] text-gray-200">
            <div className="w-[6px] shrink-0 self-center pl-px">
                <Grip />
            </div>
            <Group title="Ebene" width="w-[90px]">
                <Big icon="ucs" lines={['BKS auf Fläche', 'ausrichten']} width="w-[90px]" menu />
            </Group>
            <Group title="Zeichnen" width="w-[319px]">
                <Big icon="poly" lines={['Polylinie', '']} width="w-[42px]" menu />
                <Big icon="circle" lines={['Kreis', '']} width="w-[39px]" menu />
                <Big icon="arc" lines={['Bogen', '']} width="w-[39px]" menu />
                <Big icon="rect" lines={['Rechteck', '']} width="w-[46px]" menu />
                <SmallColumn width="w-[153px] pl-[2px]" items={[['project', 'Projekt'], ['ellipse', 'Ellipse', true], ['boundary', 'Umgrenzungs-Polylinie...', true]]} />
            </Group>
            <Group title="Erstellen" width="w-[252px]">
                <Big icon="base" lines={['Basis', 'Lasche']} width="w-[48px]" />
                <Big icon="polyExt" lines={['Polylinie', 'extrudieren']} width="w-[58px]" />
                <Big icon="formed" lines={['Blechbauteil', 'Ausformung']} width="w-[64px]" />
                <Big icon="convert" lines={['Konvertiere zu', 'Blechbauteil']} width="w-[78px]" />
            </Group>
            <Group title="Ändern" width="w-[434px]">
                <Big icon="edge" lines={['Kanten', 'Lasche']} width="w-[46px]" menu />
                <SmallColumn width="w-[120px]" items={[['form', 'Form', true], ['rib', 'Verstärkungsrippe'], ['replace', 'Ersetzen']]} />
                <SmallColumn width="w-[88px]" items={[['bend', 'Biegung', true], ['hem', 'Bördeln', true], ['relief', 'Ausklinkung', true]]} />
                <SmallColumn width="w-[103px]" items={[['junction', 'Eckverbindung', true], ['tongue', 'Zunge-Schlitz', true], ['split', 'Teilen', true]]} />
                <SmallColumn width="w-[76px]" items={[['explode', 'Auflösen'], ['erase', 'Löschen'], ['origin', 'Ursprung']]} />
            </Group>
            <Group title="Bearbeiten" width="w-[193px]">
                <div className="flex pl-[6px] pt-[3px]">
                    <SmallColumn width="w-[108px]" items={[['extrude', 'Extrudieren'], ['push', 'Drücken/Ziehen'], ['move', 'Schieben']]} />
                    <SmallColumn width="w-[78px]" items={[['imprint', 'Aufdruck', true], ['shell', 'Schale'], ['del', 'Löschen']]} />
                </div>
            </Group>
            <Group title="Parametrieren" width="w-[209px]">
                <Big icon="bkParam" lines={['BkParametrisieren']} width="w-[98px]" />
                <IconGrid
                    columns="grid-cols-5"
                    cell="w-5"
                    icons={[
                        ['lockBox'], ['points'], ['rings'], ['pair'], ['xEquals', true],
                        ['lockRound'], ['lockArc'], ['redPair'], ['redBox'], ['table', true],
                        ['lockBox'], ['lockTri'], ['redPlate'], ['lock'], ['columns', true],
                    ]}
                />
            </Group>
            <Group title="Wählen" width="w-[97px]">
                <div className="pl-[7px]">
                    <IconGrid
                        columns="grid-cols-3"
                        cell="w-[29px]"
                        icons={[
                            ['solid', true], ['capsules', true], ['hexBlue', true],
                            ['tube', true], ['planes'], ['boxArrow'],
                            ['spider'], ['arcS', true], ['shell'],
                        ]}
                    />
                </div>
            </Group>
            <Group title="Reparieren" width="w-[159px]">
                <Big icon="repair" lines={['Reparieren', '']} width="w-[62px]" menu />
                <SmallColumn width="w-[90px]" items={[['simplify', 'Vereinfachen'], ['stitch', 'Heften'], ['check', 'Prüfung']]} />
            </Group>
            <Group title="Flach" width="w-[52px]">
                <Big icon="unfold" lines={['Entfalte', 'Körper']} width="w-[52px]" menu />
            </Group>
            <Group title="Ansicht" width="w-[55px]">
                <div className="px-[3px]">
                    <Big icon="colour" lines={['Farb', 'Features']} width="w-[48px]" selected />
                </div>
            </Group>
        </div>
    )
}

function SideTabs({ labels, children }: { labels: string[]; children: ReactNode[] }) {
    return (
        <nav className="w-[49px] shrink-0 bg-[#191b1d] flex flex-col">
            {children.map((icon, i) => (
                <button key={i} aria-label={labels[i]} className={`h-[50px] flex items-center justify-center ${i === 0 ? 'bg-[#212428]' : ''}`}>
                    <svg viewBox="0 0 24 24" className="size-6" fill="none" stroke="#d5d8da">{icon}</svg>
                </button>
            ))}
        </nav>
    )
}

function Toggle({ open }: { open: boolean }) {
    return (
        <button aria-label={open ? 'Zuklappen' : 'Aufklappen'} className="size-[9px] shrink-0 flex items-center justify-center bg-gray-100 text-black">
            {open ? <Minus className="size-[7px]" strokeWidth={4} /> : <Plus className="size-[7px]" strokeWidth={4} />}
        </button>
    )
}

interface Prop {
    label: string
    value?: ReactNode
    kind?: 'header' | 'open' | 'closed'
    nested?: boolean
    muted?: boolean
}

function PropTable({ rows, labelWidth }: { rows: Prop[]; labelWidth: string }) {
    return (
        <table className="w-full table-fixed border-collapse font-['DejaVu_Sans_Condensed',sans-serif] text-[10px] leading-[17px] text-gray-200">
            <colgroup>
                <col className={labelWidth} />
                <col />
            </colgroup>
            <tbody>
                {rows.map((row, i) =>
                    row.kind === 'header' ? (
                        <tr key={i}>
                            <th colSpan={2} className="p-0">
                                <div className="flex h-[17px] items-center gap-[2px] pl-1 text-left font-bold text-white">
                                    <Toggle open />
                                    <span className="flex-1 bg-[#44474b] pl-[3px]">{row.label}</span>
                                </div>
                            </th>
                        </tr>
                    ) : (
                        <tr key={i}>
                            <td className="p-0">
                                <div className={`flex h-[17px] items-center gap-[5px] overflow-hidden whitespace-nowrap ${row.nested ? 'pl-5' : 'pl-1'}`}>
                                    {row.kind ? <Toggle open={row.kind === 'open'} /> : <span className="w-[9px] shrink-0" />}
                                    {row.label}
                                </div>
                            </td>
                            <td className={`p-0 whitespace-nowrap ${row.muted ? 'text-[#787c7f]' : ''}`}>
                                <div className="flex h-[17px] items-center">{row.value}</div>
                            </td>
                        </tr>
                    ),
                )}
            </tbody>
        </table>
    )
}

const componentRows: Prop[] = [
    { label: 'Komponente', kind: 'header' },
    { label: 'Name', value: 'Zeichnung1' },
    { label: 'Beschreibung' },
    { label: 'Blechkonstruktion', kind: 'header' },
    {
        label: 'Objekthöhe',
        value: (
            <>
                <svg viewBox="0 0 16 16" className="ml-px size-4" aria-hidden="true">
                    <path d="M2 7h12v8H2z" fill="#e4e6e8" />
                    <path d="M4.500 7V4.500a3.500 3.500 0 0 1 7 0V7" stroke="#e4e6e8" strokeWidth="2" fill="none" />
                </svg>
                2 mm
            </>
        ),
    },
    { label: 'Modellieren', kind: 'open' },
    { label: 'Biegeradius', value: '2.00 mm', kind: 'closed', nested: true, muted: true },
    { label: 'Scharfe Biegeradius Begren.', value: '10.00 mm', kind: 'closed', nested: true, muted: true },
    { label: 'Ausgeformte Biegung Unter', value: '10', nested: true },
    { label: 'Biegeausklinkungs Breite', value: '1.00 mm', kind: 'closed', nested: true, muted: true },
    { label: 'Ausklinkungs Verlängerung', value: '0.20 mm', kind: 'closed', nested: true, muted: true },
    { label: 'Eckausklinkungs Durchmess', value: 'Minimale möglich', kind: 'closed', nested: true, muted: true },
    { label: 'Verbindungs Lücke', value: '2.00 µm', kind: 'closed', nested: true, muted: true },
    { label: 'Verbindungs Ausrichtung', value: 'Deaktiviert', nested: true },
    { label: 'Gehrungs Lücke', value: '0.20 mm', kind: 'closed', nested: true, muted: true },
    { label: 'Gehrungs Erweiterung', value: '0.20 mm', kind: 'closed', nested: true, muted: true },
    { label: 'Rippen Profil Radius', value: '4.00 mm', kind: 'closed', nested: true, muted: true },
    { label: 'Rippen Abrundungs Radius', value: '2.00 mm', kind: 'closed', nested: true, muted: true },
    { label: 'Rippen Verrundungs Radius', value: '20.00 mm', kind: 'closed', nested: true, muted: true },
    { label: 'Lasche Schlitz Anzahl', value: '2', nested: true },
    { label: 'Laschen Höhe', value: '2.00 mm', kind: 'closed', nested: true, muted: true },
]

const selectionRows: Prop[] = [
    { label: 'Allgemein', kind: 'header' },
    { label: 'Farbe', value: <><span className="ml-px mr-1 size-[13px] bg-[#e8e8e8]" />VonLayer</> },
    { label: 'Layer', value: 'Volumen' },
    { label: 'Linientyp', value: <><span className="mr-[3px] h-px w-[86px] bg-gray-300" />VonLayer</> },
    { label: 'Linientypfaktor', value: '1' },
    { label: 'Linienstärke', value: <><span className="mr-[3px] h-[2px] w-[86px] bg-gray-100" />VonLayer</> },
    { label: 'Transparenz', value: 'VonLayer' },
    { label: 'Erhebung', value: '0 mm' },
    { label: 'Ansicht', kind: 'header' },
    { label: 'Kamera', value: '142.47, 511.58, -390.04', kind: 'closed' },
    { label: 'Ziel', value: '143.48, 510.46, -390.89', kind: 'closed' },
    { label: 'Perspektive', value: 'Aus' },
    { label: 'Brennweite', value: '50 mm' },
    { label: 'Blickfeld', value: '38.58' },
    { label: 'Höhe', value: '265.15 mm', muted: true },
    { label: 'Breite', value: '365.34 mm', muted: true },
    { label: 'Zuschneiden', value: 'Aus' },
    { label: 'Vordere Ebene', value: '1.73 mm' },
    { label: 'Hintere Ebene', value: '0 mm' },
    { label: 'Visueller Stil', value: 'Mechanical' },
    { label: 'Gemischt', kind: 'header' },
    { label: 'Beschriftungs Skalierung', value: '1:4' },
    { label: 'Standard-Beleuchtung', value: 'Aus' },
]

function StructurePanel() {
    return (
        <div className="w-[332px] shrink-0 flex flex-col min-h-0 pl-[2px]">
            <div className="flex h-6 items-center gap-[2px] pl-[2px]">
                <Glyph name="treeOpen" />
                <Glyph name="treeRed" className="ml-px size-4" />
                <Glyph name="sortAz" className="ml-px size-4" />
                <Glyph name="gearSave" className="ml-[6px] size-4" />
                <span className="ml-1 bg-[#35516f] px-[2px]">
                    <Glyph name="binoculars" />
                </span>
            </div>
            <div className="flex h-[20px] items-center pr-[2px]">
                <label className="flex h-[19px] flex-1 items-center gap-[6px] border border-[#4a4e52] pl-1">
                    <Search className="size-3 text-white" strokeWidth={3} />
                    <input aria-label="Suchen" placeholder="Suchen" className="flex-1 min-w-0 bg-transparent text-[11px] outline-none placeholder:text-[#5a5e62]" />
                </label>
                <button aria-label="Vorheriges" className="ml-[6px] size-4 border border-gray-200 flex items-center justify-center text-white">
                    <ArrowUp className="size-3" strokeWidth={4} />
                </button>
                <button aria-label="Nächstes" className="ml-[3px] size-4 border border-gray-200 flex items-center justify-center text-white">
                    <ArrowDown className="size-3" strokeWidth={4} />
                </button>
            </div>
            <ul className="mt-[5px] flex-1 min-h-0 border border-[#45494d] pl-[3px] pt-[2px] font-['DejaVu_Sans_Condensed',sans-serif] text-[10px] text-white">
                <li className="flex h-[17px] items-center">
                    <Toggle open />
                    <Glyph name="part" className="ml-[6px] size-4" />
                    <span className="bg-[#a9abad] px-px leading-4 font-bold">Zeichnung1</span>
                </li>
                <li className="flex h-[18px] items-center pl-2">
                    <Toggle open={false} />
                    <Glyph name="folder" className="ml-1 size-4" />
                    <span className="ml-px">Körper</span>
                </li>
                <li className="flex h-[17px] items-center pl-[21px]">
                    <Glyph name="bendPlain" />
                    <span className="ml-px">AusgeformteBiegung_1</span>
                </li>
            </ul>
            <div className="mt-px h-[350px] shrink-0 flex overflow-hidden border-b border-[#45494d]">
                <div className="flex-1 min-w-0 h-full overflow-hidden border-t border-[#45494d] pt-px">
                    <PropTable rows={componentRows} labelWidth="w-[168px]" />
                </div>
                <div className="w-[17px] flex flex-col justify-between bg-[#f0f0f0] text-[#444]">
                    <div className="h-[17px] flex items-center justify-center"><ChevronUp className="size-[10px]" strokeWidth={3} /></div>
                    <div className="h-[190px] bg-[#cdcdcd]" />
                    <div className="mt-auto h-[17px] flex items-center justify-center"><ChevronDown className="size-[10px]" strokeWidth={3} /></div>
                </div>
            </div>
            <div className="h-4 shrink-0" />
        </div>
    )
}

interface IconStripProps {
    groups: string[]
    trailing: string[]
    width: string
    gap: string
    gripClass?: string
}

function IconStrip({ groups, trailing, width, gap, gripClass }: IconStripProps) {
    const column = (icons: string, i: number) => (
        <div key={i} className="flex flex-col gap-[3px]">
            {icons.split(' ').map((name, j) => (
                <button key={j} aria-label={name} className="size-4"><Glyph name={name} /></button>
            ))}
        </div>
    )
    return (
        <div className={`${width} shrink-0 flex flex-col items-center pt-[5px] ${gap}`}>
            <GripRow />
            {groups.map(column)}
            <GripRow className={gripClass} />
            {trailing.map(column)}
        </div>
    )
}

/* front edge of the sheet, left to right */
const profile = [
    [54, 380], [90, 371], [130, 368], [153, 373], [175, 385], [204, 410], [234, 441], [265, 472], [282, 484], [299, 489],
    [330, 485], [357, 480], [377, 482], [398, 493], [427, 523], [458, 558], [482, 580], [499, 586], [512, 585],
    [539, 577], [560, 575], [580, 580], [603, 595], [629, 622], [648, 646], [667, 672],
]

const EXTRUSION = [410, -209]

function smooth(points: number[][]) {
    return points
        .slice(1)
        .map((p, i) => {
            const p0 = points[i - 1] || points[i]
            const p1 = points[i]
            const p3 = points[i + 2] || p
            const c1 = [p1[0] + (p[0] - p0[0]) / 6, p1[1] + (p[1] - p0[1]) / 6]
            const c2 = [p[0] - (p3[0] - p1[0]) / 6, p[1] - (p3[1] - p1[1]) / 6]
            return `C${c1[0]} ${c1[1]} ${c2[0]} ${c2[1]} ${p[0]} ${p[1]}`
        })
        .join('')
}

const shift = (dx: number, dy: number) => profile.map(([x, y]) => [x + dx, y + dy])

const reversed = [...profile].reverse()
/* the first two points of the far edge lie behind the silhouette line */
const far = shift(EXTRUSION[0], EXTRUSION[1]).slice(1)
far[0] = [500, 163]
const lower = shift(0, 6)

const surface = `M54 380L462 171L${far[0]}${smooth(far)}L667 672${smooth(reversed)}Z`
const thickness = `M54 380${smooth(profile)}L666 675${smooth([...lower].reverse())}Z`

const shading: [number, string][] = [
    [0.403, '#4b6f85'], [0.416, '#5b839b'], [0.438, '#80b2cd'], [0.465, '#92cbe8'], [0.602, '#92cbe8'], [0.628, '#7aacc7'],
    [0.645, '#557b92'], [0.656, '#658fa7'], [0.678, '#84b9d5'], [0.7, '#92cbe8'], [0.795, '#92cbe8'], [0.82, '#7fb3ce'],
    [0.837, '#5b8096'], [0.848, '#6a93ab'], [0.868, '#88bfdb'], [0.89, '#92cbe8'],
]

function Viewport() {
    return (
        <div className="relative flex-1 min-h-0 bg-linear-to-b from-[#7a7a7a] from-0% via-[#747474] via-45% to-[#434343] to-100%">
            <svg viewBox="0 0 1124 793" className="size-full" role="img" aria-label="Gewelltes Blech">
                <defs>
                    <linearGradient id="sheet" gradientUnits="userSpaceOnUse" x1="0" y1="0" x2="410" y2="802">
                        {shading.map(([offset, color]) => <stop key={offset} offset={offset} stopColor={color} />)}
                    </linearGradient>
                </defs>
                <path d={surface} fill="url(#sheet)" stroke="#3e5563" strokeWidth="1" />
                <path d={thickness} fill="#d3d3d3" stroke="#4a4a4a" strokeWidth="0.500" />
                <path d="M667 673L1077 464" stroke="#141c22" strokeWidth="2" />
                <path d="M106 712V655" stroke="#1560d8" strokeWidth="3" />
                <path d="M106 641l5 16h-10z" fill="#1277f0" />
                <path d="M101 634h9" stroke="#4c6f9c" strokeWidth="1" opacity="0.600" />
                <path d="M106 711L57 690" stroke="#f07884" strokeWidth="3" />
                <path d="M48 686l11 1-4 7z" fill="#e05563" />
                <path d="M36 677l10 10M45 677l-9 10" stroke="#b26068" />
                <path d="M106 712L60 736" stroke="#0f9f4d" strokeWidth="3" />
                <path d="M52 739l7-10 6 8z" fill="#0fae54" />
                <path d="M42 737l4 6v6M51 736l-5 7" stroke="#2f7a52" fill="none" />
                <path d="M894 140v22M894 173v20" stroke="#5f6d92" />
                <path d="M870 157l20 9M898 170l12 6" stroke="#a8686a" />
                <path d="M890 164h8v8h-8z" stroke="#1c1c1c" fill="none" />
            </svg>
            <svg viewBox="0 0 76 76" className="absolute right-[11px] top-[12px] size-[76px]" aria-hidden="true">
                <circle cx="38" cy="38" r="38" fill="#bdbdbd" />
                {[0, 45, 90, 135, 180, 225, 270, 315].map((angle) => (
                    <path key={angle} d="M36 6h5l-2.500 4z" fill="#5f5f5f" transform={`rotate(${angle} 38 38)`} />
                ))}
            </svg>
        </div>
    )
}

function DocumentArea() {
    return (
        <main className="flex-1 min-w-0 flex flex-col border-r border-[#4a4e51]">
            <div role="tablist" className="h-[18px] shrink-0 flex items-center border-b border-[#23262a] font-['DejaVu_Sans_Condensed',sans-serif] text-[10px] font-bold text-white">
                <div className="flex h-full w-[65px] items-center justify-between bg-[#191b1d] pl-[11px] pr-[6px] pt-px">
                    <button role="tab" aria-selected="false">Start</button>
                    <button aria-label="Start schließen"><X className="size-[14px]" strokeWidth={1} /></button>
                </div>
                <div className="flex h-full w-[104px] items-center justify-between pl-[9px] pr-1 pt-px">
                    <button role="tab" aria-selected="true">Zeichnung1*</button>
                    <button aria-label="Zeichnung1 schließen"><X className="size-[14px]" strokeWidth={1} /></button>
                </div>
                <button aria-label="Neue Zeichnung" className="flex h-full w-6 items-center justify-center bg-[#191b1d] pt-px">
                    <Plus className="size-[14px]" strokeWidth={1} />
                </button>
            </div>
            <Viewport />
            <div className="h-[24px] shrink-0 border-b-[7px] border-[#434041] bg-[#393839] flex items-center pl-[5px] pr-2">
                <Grip />
                <span className="ml-[5px] font-['DejaVu_Sans_Mono',monospace] text-xs text-gray-300">:</span>
                <input aria-label="Befehlszeile" placeholder="Befehl eingeben" className="ml-[7px] flex-1 bg-transparent font-['DejaVu_Sans_Mono',monospace] text-xs italic outline-none placeholder:text-[#8a8a8a]" />
                <button aria-label="Befehlszeile minimieren" className="h-[6px] w-[11px] bg-[#dcdcdc]" />
            </div>
            <div className="h-4 shrink-0 flex">
                <div className="flex items-center bg-[#191b1d] font-['DejaVu_Sans_Condensed',sans-serif] text-[10px] text-gray-100">
                    {['M3 2v8M9 2v8L4 6z', 'M8 2v8L3 6z', 'M4 2v8l5-4z', 'M9 2v8M3 2v8l5-4z'].map((d, i) => (
                        <button key={i} aria-label={['Erstes Layout', 'Vorheriges Layout', 'Nächstes Layout', 'Letztes Layout'][i]} className="flex h-4 w-[17px] items-center justify-center border-l border-[#505357]">
                            <svg viewBox="0 0 12 12" className="size-3" fill="#fff" stroke="#fff"><path d={d} /></svg>
                        </button>
                    ))}
                    <svg viewBox="0 0 12 14" className="ml-[2px] h-[14px] w-3" stroke="#d5d8da" fill="none" aria-hidden="true">
                        <path d="M.5 1.500h11v11H.5zM.5 5h11M.5 9h11" />
                    </svg>
                    <button className="ml-[5px] w-9 text-left font-bold">Model</button>
                    <button className="w-[46px] text-left">Layout1</button>
                    <button className="w-[44px] text-left">Layout2</button>
                    <button aria-label="Neues Layout" className="w-[10px]">+</button>
                </div>
            </div>
        </main>
    )
}

function PropertiesPanel() {
    return (
        <div className="w-[308px] shrink-0 pt-[2px]">
            <div className="mb-[5px] flex h-[17px] items-center pl-[2px]">
                <div className="flex h-[17px] flex-1 items-center bg-[#3f4246] pl-[2px] pr-1">
                    <select aria-label="Auswahl" className="flex-1 appearance-none bg-transparent font-['DejaVu_Sans_Condensed',sans-serif] text-[10px] text-gray-100 outline-none">
                        <option>Keine Auswahl</option>
                    </select>
                    <ChevronDown className="size-3 text-gray-400" />
                </div>
                <svg viewBox="0 0 27 16" className="h-4 w-[27px]" fill="none" aria-hidden="true">
                    <path d="M6 5l3 3 3-4M9 8v3" stroke={W} />
                    <circle cx="10" cy="11" r="1.500" fill={Y} />
                    <path d="M15 5h9v7h-9z" fill="#2b7fd0" />
                    <circle cx="19.500" cy="8.500" r="2" fill="#d9ecff" />
                </svg>
            </div>
            <PropTable rows={selectionRows} labelWidth="w-[139px]" />
        </div>
    )
}

const statusItems: [string, string, ('on' | 'off')?][] = [
    ['Standard', 'w-[47px]'],
    ['ISO-25', 'w-9'],
    ['Mechanical', 'w-14'],
    ['FANG', 'w-[33px]', 'off'],
    ['RASTER', 'w-[46px]', 'off'],
    ['ORTHO', 'w-[38px]', 'off'],
    ['POLAR', 'w-9', 'on'],
    ['OFANG', 'w-[39px]', 'on'],
    ['OTRACK', 'w-[43px]', 'on'],
    ['LST', 'w-[21px]', 'off'],
    ['MODELL', 'w-[42px]'],
    ['1:4', 'w-5'],
    ['DBKS', 'w-[29px]', 'on'],
    ['DYN', 'w-6', 'on'],
    ['QUAD', 'w-8', 'on'],
    ['RT', 'w-4', 'on'],
    ['HKA', 'w-[25px]', 'on'],
    ['UISPERREN', 'w-[58px]', 'off'],
    ['Keine', 'w-[31px]'],
    ['▾', 'w-3'],
]

const statusColors = { on: 'bg-[#383b40] text-white', off: 'text-[#686c70]' }

function StatusBar() {
    return (
        <footer className="h-[17px] shrink-0 flex items-center border-b-2 border-[#4b8d78] bg-[#141618] font-['DejaVu_Sans_Condensed',sans-serif] text-[10px] leading-[14px] text-gray-200">
            <span className="ml-[2px] pt-px">Bereit</span>
            <span className="ml-auto w-[109px] border-l border-[#a0a0a0] pr-[2px] pt-px text-right">30.31, 273.24, 0</span>
            {statusItems.map(([label, width, state]) => (
                <button key={label} className={`${width} overflow-hidden whitespace-nowrap border-l border-[#a0a0a0] pt-px text-center ${state ? statusColors[state] : ''}`}>
                    {label}
                </button>
            ))}
            <svg viewBox="0 0 12 12" className="ml-1 mr-px size-3" aria-hidden="true">
                <path d="M8 2h2v2H8zM5 5h2v2H5zM8 5h2v2H8zM2 8h2v2H2zM5 8h2v2H5zM8 8h2v2H8z" fill="#b5b5b5" />
            </svg>
        </footer>
    )
}

export default function App() {
    return (
        <div className="h-screen flex flex-col overflow-hidden bg-white font-[Roboto,sans-serif] text-gray-200">
            <TitleBar />
            <MenuBar />
            <Toolbar />
            <RibbonTabs />
            <Ribbon />
            <div className="flex-1 min-h-0 flex bg-[#2e3235]">
                <div className="shrink-0 flex flex-col">
                    <div className="h-[10px] shrink-0 flex justify-center pt-[2px]">
                        <GripRow />
                    </div>
                    <div className="flex-1 min-h-0 flex">
                        <SideTabs labels={['Struktur', 'Tipps', 'Mechanik', 'Tabelle']}>
                            <path key="a" d="M12 4l10 5v10l-10 5-10-5V9zM2 9l10 5 10-5M12 14v10M8 5v3c1 2 7 2 8 0V5M8 5a4 2 0 0 1 8 0a4 2 0 0 1-8 0" />
                            <path key="b" d="M12 1C5 1 1 5 1 9c0 4 6 8 9 11h4c3-3 9-7 9-11 0-4-4-8-11-8zM12 1C4 3 7 14 11 20M12 1c8 2 5 13 1 19M12 1v19M10 21h4v3h-4z" />
                            <path key="c" d="M1 1h12v6H1zM4 4h6M7 7v13h5M7 12h5M12 10h12v5H12zM12 18h12v5H12z" />
                            <path key="d" d="M.5 1.500h23v21H.5zM.5 6.500h23M.5 12h23M.5 17.500h23M8 6.500v16M16 6.500v16" />
                        </SideTabs>
                        <StructurePanel />
                    </div>
                </div>
                <IconStrip
                    width="w-[30px] pl-[8px]"
                    gap="gap-[6px]"
                    gripClass="mt-1"
                    groups={[
                        'line polyline rect',
                        'arc circleTool ellipse arcEll spline pointTool',
                        'blueFill blueFill boundary lens blob zTool',
                        'cloud grid bigA smallA',
                    ]}
                    trailing={['press feather slab', 'win winCube']}
                />
                <DocumentArea />
                <IconStrip
                    width="w-[26px] pr-1"
                    gap="gap-[7px]"
                    groups={[
                        'moveAll copy offset brush dropper scale',
                        'copyFast moveFast',
                        'rotate rotate3d',
                        'mirror mirror3d',
                        'array',
                        'align',
                        'stretch trim breakA breakB extend chamfer chamferB',
                        'fillet',
                        'chain chain',
                        'hatchEdit curveEdit splineEdit',
                        'cubeSplit origin',
                    ]}
                    trailing={['cube cubeBlue', 'blueBox cubeDark']}
                />
                <div className="shrink-0 flex flex-col">
                    <div className="h-[10px] shrink-0 flex justify-center pt-[2px]">
                        <GripRow />
                    </div>
                    <div className="flex-1 min-h-0 flex">
                        <PropertiesPanel />
                        <SideTabs labels={['Eigenschaften', 'Layer', 'Blöcke']}>
                            <path key="a" d="M0 4h4M9 4h15M0 12h16M21 12h3M0 20h9M14 20h10M4 4a2.500 2.500 0 1 0 5 0a2.500 2.500 0 1 0-5 0M16 12a2.500 2.500 0 1 0 5 0a2.500 2.500 0 1 0-5 0M9 20a2.500 2.500 0 1 0 5 0a2.500 2.500 0 1 0-5 0" />
                            <path key="b" d="M12 1l11 6.500-11 6.500L1 7.500zM1 12l11 6.500L23 12M1 16.500L12 23l11-6.500" />
                            <path key="c" d="M2.500 1.500h7v7h-7zM14.500 1.500h7v7h-7zM2.500 13.500h7v7h-7zM14.500 13.500h7v7h-7zM2 10.500h8M14 10.500h8M2 23.500h8M14 23.500h8" />
                        </SideTabs>
                    </div>
                </div>
            </div>
            <StatusBar />
            <div className="h-[39px] shrink-0 bg-white" />
        </div>
    )
}
